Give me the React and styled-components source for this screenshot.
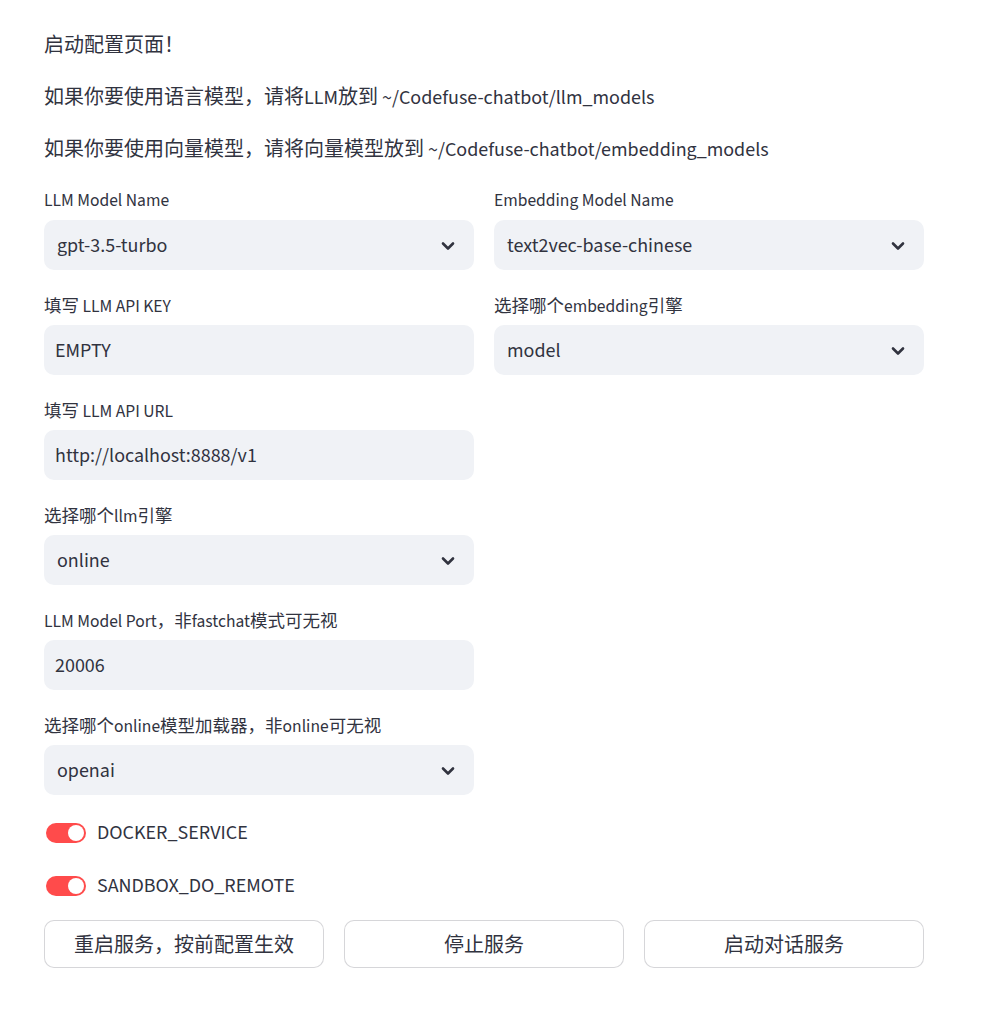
import React from "react";
import styled, { createGlobalStyle } from "styled-components";

const GlobalStyle = createGlobalStyle`
  body {
    margin: 0;
    background: #ffffff;
    color: #31333f;
    font-family: "Source Sans 3", Lato, "Noto Sans CJK SC", sans-serif;
  }
`;

const StyledMain = styled.main`
  width: 880px;
  padding: 30px 0 40px 44px;
  display: flex;
  flex-direction: column;
  gap: 20px;
`;

const StyledIntro = styled.div`
  display: flex;
  flex-direction: column;
  gap: 20px;
  margin-bottom: -1px;
`;

const StyledParagraph = styled.p`
  margin: 0;
  font-size: 20px;
  line-height: 32px;
`;

const StyledColumns = styled.div`
  display: grid;
  grid-template-columns: ${({ $cols }) => `repeat(${$cols}, 1fr)`};
  gap: 20px;
  align-items: start;
`;

const StyledColumn = styled.div`
  display: flex;
  flex-direction: column;
  gap: 20px;
`;

const StyledField = styled.div`
  display: flex;
  flex-direction: column;
  gap: 5px;
`;

const StyledLabel = styled.label`
  height: 30px;
  display: flex;
  align-items: center;
  font-size: 17.5px;
  color: #31333f;
`;

const StyledBox = styled.div`
  height: 50px;
  box-sizing: border-box;
  border-radius: 10px;
  background-color: #f0f2f6;
  display: flex;
  align-items: center;
  justify-content: space-between;
  padding: ${({ $select }) => ($select ? "2px 18px 0 13px" : "2px 11px 0")};
  font-size: 20px;
  color: #31333f;
`;

const StyledToggles = styled.div`
  display: flex;
  flex-direction: column;
  gap: 20px;
  margin-bottom: -1px;
`;

const StyledToggleRow = styled.div`
  height: 33px;
  box-sizing: border-box;
  padding: 2px 0 0 2px;
  display: flex;
  align-items: center;
  gap: 11px;
  font-size: 20px;
`;

const StyledTrack = styled.span`
  width: 40px;
  height: 20px;
  border-radius: 10px;
  background-color: #ff4b4b;
  display: flex;
  align-items: center;
  justify-content: flex-end;
  padding-right: 2px;
  box-sizing: border-box;
`;

const StyledKnob = styled.span`
  width: 16px;
  height: 16px;
  border-radius: 50%;
  background-color: #ffffff;
`;

const StyledButton = styled.button`
  height: 48px;
  border: 1px solid rgba(49, 51, 63, 0.2);
  border-radius: 10px;
  background-color: #ffffff;
  color: #31333f;
  font-family: inherit;
  font-size: 20px;
  cursor: pointer;
`;

const Chevron = () => (
  <svg width="16" height="16" viewBox="0 0 16 16" fill="none">
    <polyline
      points="3,5.5 8,10.5 13,5.5"
      stroke="#31333f"
      strokeWidth="2.6"
      strokeLinecap="round"
      strokeLinejoin="round"
    />
  </svg>
);

const Field = ({ label, value, select }) => (
  <StyledField>
    <StyledLabel>{label}</StyledLabel>
    <StyledBox $select={select}>
      <span>{value}</span>
      {select && <Chevron />}
    </StyledBox>
  </StyledField>
);

const Toggle = ({ label }) => (
  <StyledToggleRow>
    <StyledTrack>
      <StyledKnob />
    </StyledTrack>
    <span>{label}</span>
  </StyledToggleRow>
);

const leftFields = [
  { label: "LLM Model Name", value: "gpt-3.5-turbo", select: true },
  { label: "填写 LLM API KEY", value: "EMPTY" },
  { label: "填写 LLM API URL", value: "http://localhost:8888/v1" },
  { label: "选择哪个llm引擎", value: "online", select: true },
  { label: "LLM Model Port，非fastchat模式可无视", value: "20006" },
  { label: "选择哪个online模型加载器，非online可无视", value: "openai", select: true },
];

const rightFields = [
  { label: "Embedding Model Name", value: "text2vec-base-chinese", select: true },
  { label: "选择哪个embedding引擎", value: "model", select: true },
];

const App = () => (
  <>
    <GlobalStyle />
    <StyledMain>
      <StyledIntro>
        <StyledParagraph>启动配置页面！</StyledParagraph>
        <StyledParagraph>如果你要使用语言模型，请将LLM放到 ~/Codefuse-chatbot/llm_models</StyledParagraph>
        <StyledParagraph>
          如果你要使用向量模型，请将向量模型放到 ~/Codefuse-chatbot/embedding_models
        </StyledParagraph>
      </StyledIntro>

      <StyledColumns $cols={2}>
        <StyledColumn>
          {leftFields.map((field, index) => (
            <Field key={index} {...field} />
          ))}
        </StyledColumn>
        <StyledColumn>
          {rightFields.map((field, index) => (
            <Field key={index} {...field} />
          ))}
        </StyledColumn>
      </StyledColumns>

      <StyledToggles>
        <Toggle label="DOCKER_SERVICE" />
        <Toggle label="SANDBOX_DO_REMOTE" />
      </StyledToggles>

      <StyledColumns $cols={3}>
        <StyledButton>重启服务，按前配置生效</StyledButton>
        <StyledButton>停止服务</StyledButton>
        <StyledButton>启动对话服务</StyledButton>
      </StyledColumns>
    </StyledMain>
  </>
);

export default App;
